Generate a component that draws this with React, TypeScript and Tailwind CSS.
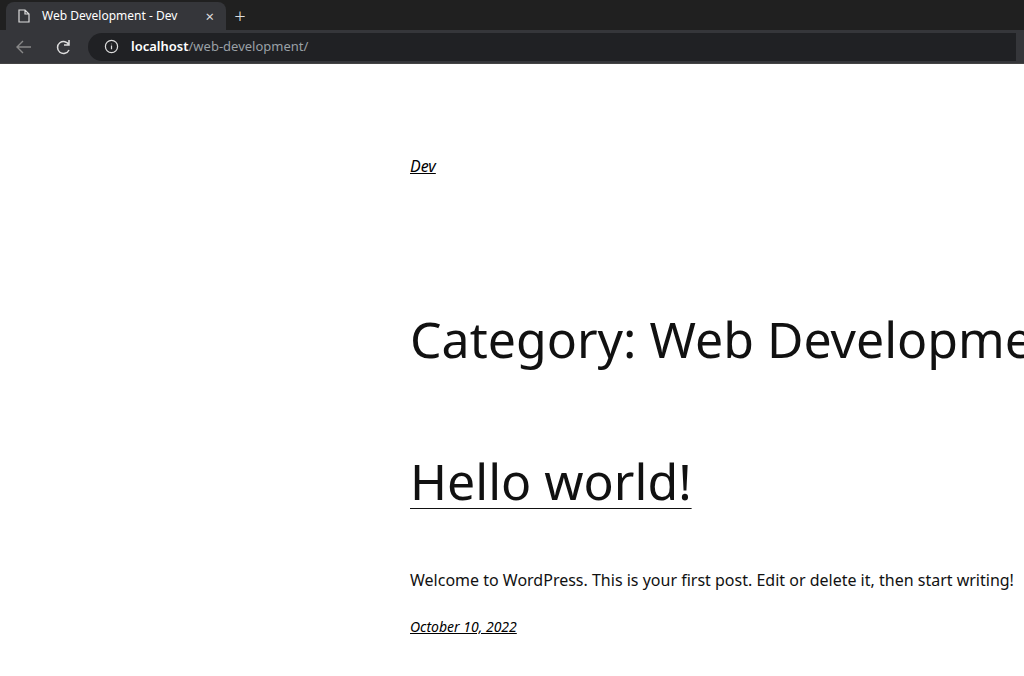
export default function App() {
  return (
    <div className="w-[1024px] h-[676px] overflow-hidden bg-white">
      <div className="h-[30px] bg-[#202020] flex items-end">
        <div className="ml-[6px] w-[220px] h-[28px] bg-[#35363a] rounded-t-lg flex items-center px-3 gap-3 text-[12px] text-white font-[family-name:'Open_Sans',sans-serif]">
          <svg width="12" height="14" viewBox="0 0 12 14" fill="none" stroke="#ddd" strokeWidth="1.2"><path d="M1 1h6l4 4v8H1z M7 1v4h4" /></svg>
          <span className="flex-1">Web Development - Dev</span>
          <span className="text-[15px] text-[#ddd]">×</span>
        </div>
        <div className="w-[28px] h-[28px] flex items-center justify-center text-[#ddd] text-[20px] font-light">+</div>
      </div>
      <div className="h-[34px] bg-[#35363a] flex items-center gap-2 px-2 border-b border-[#444]">
        <svg width="32" height="28" viewBox="0 0 32 28" fill="none" stroke="#888" strokeWidth="1.4"><path d="M23 14H9M15 8l-6 6 6 6" /></svg>
        <svg width="32" height="28" viewBox="0 0 32 28" fill="none" stroke="#ddd" strokeWidth="1.5"><path d="M21 12a6 6 0 1 0 0 5M21 7v5h-5" /></svg>
        <div className="flex-1 h-[28px] bg-[#202124] rounded-l-full flex items-center gap-3 pl-4 text-[13px] font-[family-name:'Open_Sans',sans-serif]">
          <svg width="15" height="15" viewBox="0 0 16 16" fill="none" stroke="#ddd" strokeWidth="1.3"><circle cx="8" cy="8" r="6.5" /><path d="M8 7v4M8 5v.5" /></svg>
          <span><span className="text-white font-semibold">localhost</span><span className="text-[#9aa0a6]">/web-development/</span></span>
        </div>
      </div>
      <div className="pl-[410px] text-black">
        <div className="pt-[90px] text-[16px] italic underline font-[family-name:'Open_Sans',sans-serif]">Dev</div>
        <h1 className="mt-[136px] text-[50px] leading-none font-[family-name:'Liberation_Serif',serif] font-normal text-[#111] whitespace-nowrap">Category: Web Development</h1>
        <h2 className="mt-[92px] text-[50px] leading-none font-[family-name:'Liberation_Serif',serif] underline decoration-1 underline-offset-[8px] text-[#111]">Hello world!</h2>
        <p className="mt-[62px] text-[16px] font-[family-name:'Open_Sans',sans-serif] text-[#111] whitespace-nowrap">Welcome to WordPress. This is your first post. Edit or delete it, then start writing!</p>
        <p className="mt-[24px] text-[14px] italic underline font-[family-name:'Open_Sans',sans-serif]">October 10, 2022</p>
      </div>
    </div>
  );
}
